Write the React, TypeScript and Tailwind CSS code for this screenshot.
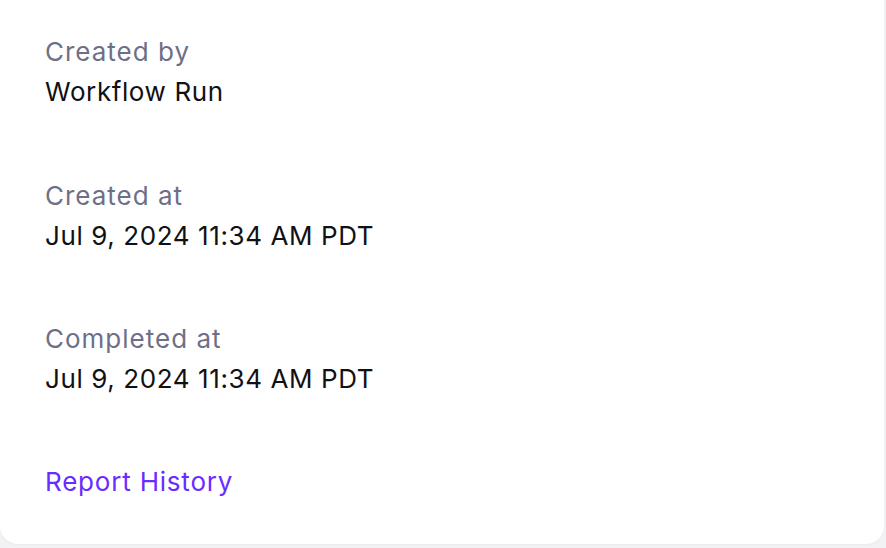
const rows = [
  { label: "Created by", value: "Workflow Run" },
  { label: "Created at", value: "Jul 9, 2024 11:34 AM PDT" },
  { label: "Completed at", value: "Jul 9, 2024 11:34 AM PDT" },
];

export default function App() {
  return (
    <div className="h-[548px] w-[886px] overflow-hidden bg-[#f2f2f4] font-['Inter',sans-serif]">
      <div className="-mt-[20px] mr-[2px] flex h-[564px] flex-col rounded-[18px] bg-white pl-[45px] pt-[52px] shadow-[0_1px_2px_rgba(0,0,0,0.04)]">
        {rows.map((r) => (
          <div key={r.label} className="mb-[63.5px] flex flex-col">
            <span className="text-[26px] leading-[40px] tracking-[1px] text-[#6e6f86]">{r.label}</span>
            <span className="text-[26px] leading-[40px] tracking-[0.6px] text-[#111113]">{r.value}</span>
          </div>
        ))}
        <a className="-mt-[1px] text-[26px] leading-[40px] tracking-[0.8px] text-[#6a2cff]">Report History</a>
      </div>
    </div>
  );
}
